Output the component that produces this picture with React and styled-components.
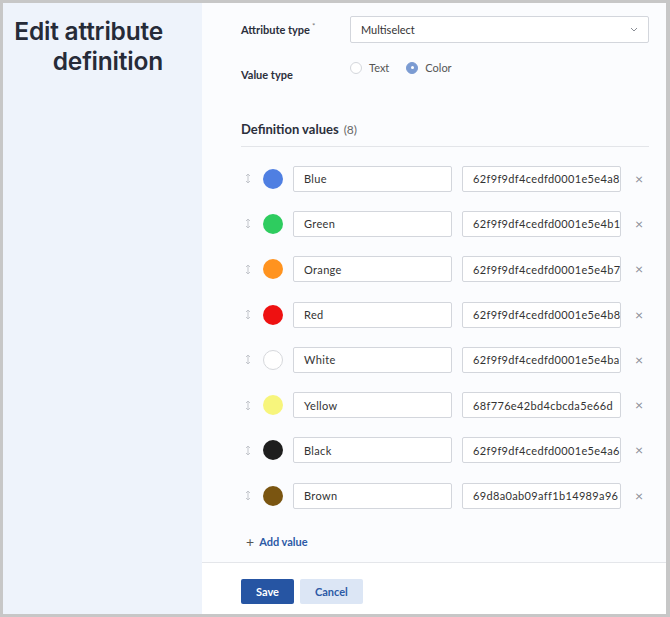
import React from 'react';
import styled, { createGlobalStyle } from 'styled-components';

const GlobalStyle = createGlobalStyle`
  html, body {
    margin: 0;
    padding: 0;
    background: #ffffff;
  }
  * {
    box-sizing: border-box;
  }
`;

const Frame = styled.div`
  width: 670px;
  height: 617px;
  border: 3px solid #c7c7c7;
  border-right-width: 4px;
  display: flex;
  font-family: Lato, "Open Sans", sans-serif;
  color: #2b2f3b;
  overflow: hidden;
`;

const Side = styled.div`
  width: 199px;
  flex-shrink: 0;
  background: #eef3fb;
  padding: 13px 39px 0 0;
  text-align: right;
`;

const Title = styled.h1`
  margin: 0;
  font-family: Inter, Lato, sans-serif;
  font-size: 24.5px;
  line-height: 30px;
  font-weight: 600;
  letter-spacing: -0.2px;
  color: #262b38;
`;

const Main = styled.div`
  flex: 1;
  display: flex;
  flex-direction: column;
  background: #fbfcfe;
`;

const Body = styled.div`
  flex: 1;
  padding: 13px 17px 0 39px;
`;

const FieldRow = styled.div`
  display: flex;
  align-items: ${(p) => p.$align || 'center'};
  margin-bottom: ${(p) => p.$mb || 0}px;
`;

const Label = styled.div`
  width: 109px;
  font-size: 11px;
  font-weight: 700;
  color: #2b2f3b;
  padding-top: ${(p) => p.$pt || 0}px;
  margin-top: ${(p) => p.$mt || 0}px;
  sup {
    font-size: 8px;
    font-weight: 400;
    color: #777;
    margin-left: 2px;
  }
`;

const Select = styled.div`
  flex: 1;
  height: 27px;
  border: 1px solid #d3d6dc;
  border-radius: 2px;
  background: #fff;
  display: flex;
  align-items: center;
  justify-content: space-between;
  padding: 0 10px;
  font-size: 11px;
  color: #333;
`;

const Radios = styled.div`
  display: flex;
  align-items: center;
  gap: 17px;
  padding-top: ${(p) => p.$pt || 0}px;
`;

const RadioItem = styled.label`
  display: flex;
  align-items: center;
  gap: 7px;
  font-size: 11px;
  color: #555;
`;

const RadioDot = styled.span`
  width: 12px;
  height: 12px;
  border-radius: 50%;
  border: 1px solid ${(p) => (p.$on ? '#7b9bd2' : '#d4d7dc')};
  background: ${(p) => (p.$on ? '#7b9bd2' : '#fff')};
  display: flex;
  align-items: center;
  justify-content: center;
  &::after {
    content: '';
    width: 3px;
    height: 3px;
    border-radius: 50%;
    background: ${(p) => (p.$on ? '#fff' : 'transparent')};
  }
`;

const SectionHead = styled.div`
  margin-top: 40px;
  padding-bottom: 9px;
  border-bottom: 1px solid #e3e5e9;
  font-size: 13px;
  font-weight: 700;
  color: #2b2f3b;
  span {
    font-weight: 400;
    color: #666;
    margin-left: 5px;
    font-size: 12px;
  }
`;

const List = styled.div`
  padding-top: 9px;
`;

const ValueRow = styled.div`
  height: 45.3px;
  display: flex;
  align-items: center;
`;

const Handle = styled.span`
  width: 22px;
  padding-left: 4px;
  display: flex;
  align-items: center;
`;

const Swatch = styled.span`
  width: 20px;
  height: 20px;
  border-radius: 50%;
  background: ${(p) => p.$color};
  border: ${(p) => (p.$bordered ? '1px solid #d6d8dc' : 'none')};
  margin-right: 10px;
  flex-shrink: 0;
`;

const TextBox = styled.div`
  width: 159px;
  height: 26px;
  border: 1px solid #d3d6dc;
  border-radius: 2px;
  background: #fff;
  padding: 0 10px;
  display: flex;
  align-items: center;
  font-size: 11px;
  letter-spacing: 0.35px;
  color: #333;
  white-space: nowrap;
  overflow: hidden;
  margin-right: ${(p) => p.$mr || 0}px;
`;

const Remove = styled.span`
  margin-left: 14px;
  color: #8a8e96;
  font-size: 14px;
  line-height: 1;
`;

const AddLink = styled.div`
  margin-top: 15px;
  padding-left: 5px;
  display: flex;
  align-items: center;
  gap: 5px;
  font-size: 11px;
  font-weight: 700;
  color: #2c5aa6;
  em {
    font-style: normal;
    font-weight: 400;
    color: #555;
    font-size: 14px;
  }
`;

const Footer = styled.div`
  height: 52px;
  background: #ffffff;
  border-top: 1px solid #e4e6ea;
  padding: 16px 0 0 39px;
  display: flex;
  gap: 6px;
`;

const Button = styled.button`
  height: 25px;
  padding: 0 ${(p) => p.$px}px;
  border: none;
  border-radius: 2px;
  font-family: inherit;
  font-size: 11px;
  font-weight: 700;
  background: ${(p) => (p.$primary ? '#2655a3' : '#dce6f5')};
  color: ${(p) => (p.$primary ? '#ffffff' : '#2c5aa6')};
`;

const values = [
  { name: 'Blue', color: '#4f7fe2', id: '62f9f9df4cedfd0001e5e4a8' },
  { name: 'Green', color: '#2ecc5f', id: '62f9f9df4cedfd0001e5e4b1' },
  { name: 'Orange', color: '#ff931f', id: '62f9f9df4cedfd0001e5e4b7' },
  { name: 'Red', color: '#ee1111', id: '62f9f9df4cedfd0001e5e4b8' },
  { name: 'White', color: '#ffffff', id: '62f9f9df4cedfd0001e5e4ba', bordered: true },
  { name: 'Yellow', color: '#f7f57c', id: '68f776e42bd4cbcda5e66d' },
  { name: 'Black', color: '#1e1e1e', id: '62f9f9df4cedfd0001e5e4a6' },
  { name: 'Brown', color: '#7a5511', id: '69d8a0ab09aff1b14989a96' },
];

const Chevron = () => (
  <svg width="8" height="5" viewBox="0 0 8 5" fill="none">
    <path d="M1 1l3 3 3-3" stroke="#8a8e96" strokeWidth="1" />
  </svg>
);

const DragIcon = () => (
  <svg width="6" height="11" viewBox="0 0 6 11" fill="none">
    <path d="M3 1v9M1 3l2-2 2 2M1 8l2 2 2-2" stroke="#c3c6cc" strokeWidth="1" />
  </svg>
);

export default function App() {
  return (
    <>
      <GlobalStyle />
      <Frame>
        <Side>
          <Title>
            Edit attribute
            <br />
            definition
          </Title>
        </Side>
        <Main>
          <Body>
            <FieldRow $mb={14}>
              <Label $mt={-3}>
                Attribute type<sup>*</sup>
              </Label>
              <Select>
                Multiselect
                <Chevron />
              </Select>
            </FieldRow>
            <FieldRow $align="flex-start">
              <Label $pt={11}>Value type</Label>
              <Radios $pt={4}>
                <RadioItem>
                  <RadioDot />
                  Text
                </RadioItem>
                <RadioItem>
                  <RadioDot $on />
                  Color
                </RadioItem>
              </Radios>
            </FieldRow>
            <SectionHead>
              Definition values<span>(8)</span>
            </SectionHead>
            <List>
              {values.map((v) => (
                <ValueRow key={v.name}>
                  <Handle>
                    <DragIcon />
                  </Handle>
                  <Swatch $color={v.color} $bordered={v.bordered} />
                  <TextBox $mr={10}>{v.name}</TextBox>
                  <TextBox>{v.id}</TextBox>
                  <Remove>×</Remove>
                </ValueRow>
              ))}
            </List>
            <AddLink>
              <em>+</em>
              Add value
            </AddLink>
          </Body>
          <Footer>
            <Button $primary $px={15}>Save</Button>
            <Button $px={15}>Cancel</Button>
          </Footer>
        </Main>
      </Frame>
    </>
  );
}
